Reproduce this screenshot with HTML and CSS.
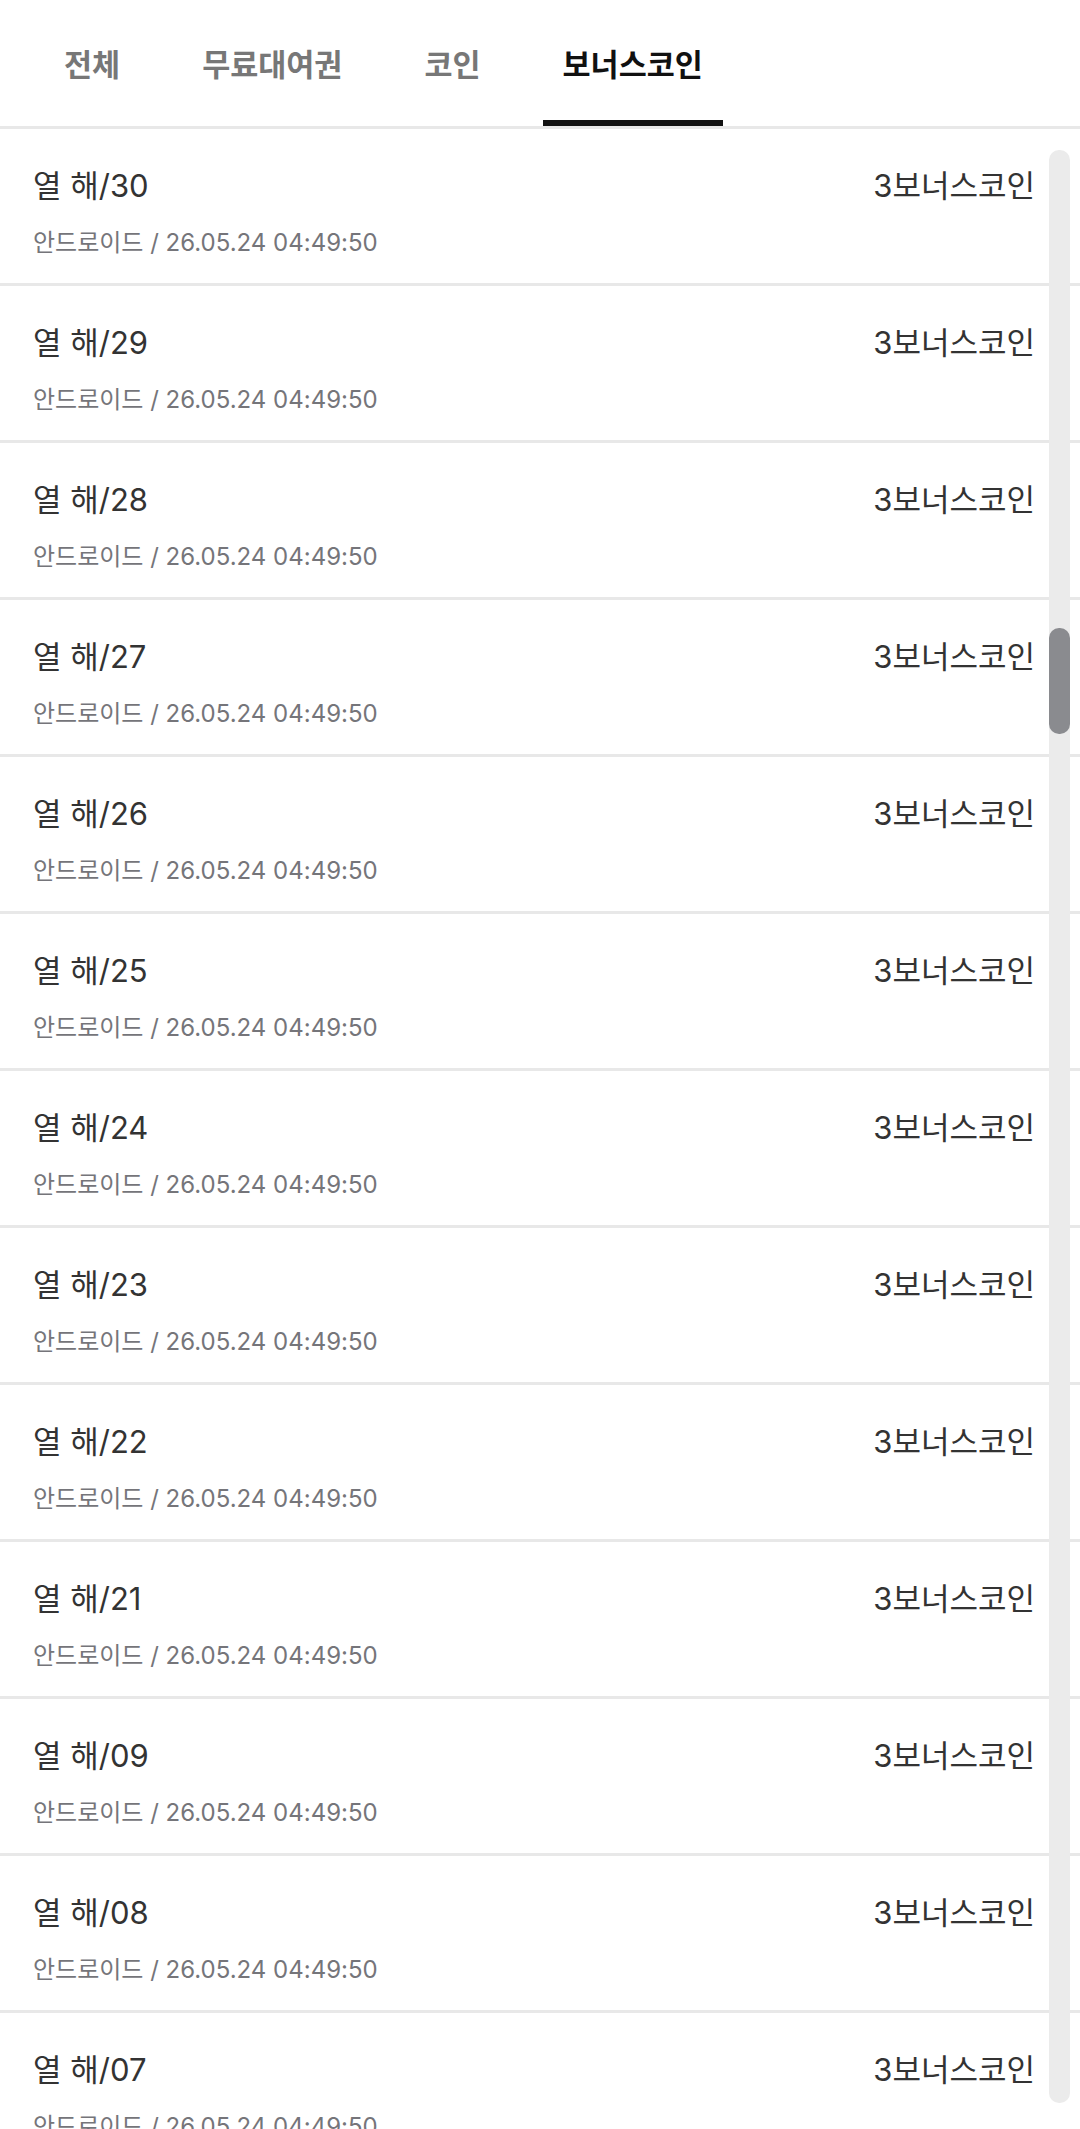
FILE: index.html
```html
<!DOCTYPE html>
<html lang="ko">
<head>
<meta charset="utf-8">
<title>보너스코인</title>
<link rel="stylesheet" href="styles.css">
</head>
<body>
<div class="page">
  <nav class="tabs">
    <a class="tab">전체</a>
    <a class="tab">무료대여권</a>
    <a class="tab">코인</a>
    <a class="tab active">보너스코인</a>
  </nav>
  <ul class="list">
    <li class="row"><div class="info"><div class="title">열 해/30</div><div class="sub">안드로이드 / 26.05.24 04:49:50</div></div><div class="amount">3보너스코인</div></li>
    <li class="row"><div class="info"><div class="title">열 해/29</div><div class="sub">안드로이드 / 26.05.24 04:49:50</div></div><div class="amount">3보너스코인</div></li>
    <li class="row"><div class="info"><div class="title">열 해/28</div><div class="sub">안드로이드 / 26.05.24 04:49:50</div></div><div class="amount">3보너스코인</div></li>
    <li class="row"><div class="info"><div class="title">열 해/27</div><div class="sub">안드로이드 / 26.05.24 04:49:50</div></div><div class="amount">3보너스코인</div></li>
    <li class="row"><div class="info"><div class="title">열 해/26</div><div class="sub">안드로이드 / 26.05.24 04:49:50</div></div><div class="amount">3보너스코인</div></li>
    <li class="row"><div class="info"><div class="title">열 해/25</div><div class="sub">안드로이드 / 26.05.24 04:49:50</div></div><div class="amount">3보너스코인</div></li>
    <li class="row"><div class="info"><div class="title">열 해/24</div><div class="sub">안드로이드 / 26.05.24 04:49:50</div></div><div class="amount">3보너스코인</div></li>
    <li class="row"><div class="info"><div class="title">열 해/23</div><div class="sub">안드로이드 / 26.05.24 04:49:50</div></div><div class="amount">3보너스코인</div></li>
    <li class="row"><div class="info"><div class="title">열 해/22</div><div class="sub">안드로이드 / 26.05.24 04:49:50</div></div><div class="amount">3보너스코인</div></li>
    <li class="row"><div class="info"><div class="title">열 해/21</div><div class="sub">안드로이드 / 26.05.24 04:49:50</div></div><div class="amount">3보너스코인</div></li>
    <li class="row"><div class="info"><div class="title">열 해/09</div><div class="sub">안드로이드 / 26.05.24 04:49:50</div></div><div class="amount">3보너스코인</div></li>
    <li class="row"><div class="info"><div class="title">열 해/08</div><div class="sub">안드로이드 / 26.05.24 04:49:50</div></div><div class="amount">3보너스코인</div></li>
    <li class="row"><div class="info"><div class="title">열 해/07</div><div class="sub">안드로이드 / 26.05.24 04:49:50</div></div><div class="amount">3보너스코인</div></li>
  </ul>
  <div class="scrollbar"><div class="thumb"></div></div>
</div>
</body>
</html>
```
FILE: styles.css
```css
html, body {
  margin: 0;
  padding: 0;
  background: #ffffff;
}
body {
  font-family: Inter, "Noto Sans CJK KR", sans-serif;
  height: 2129px;
  overflow: hidden;
}
.page {
  position: relative;
  width: 1080px;
  height: 2129px;
  overflow: hidden;
}
.tabs {
  display: flex;
  gap: 42px;
  padding-left: 44px;
  height: 126px;
  border-bottom: 3px solid #e8e8e8;
}
.tab {
  position: relative;
  display: flex;
  align-items: center;
  padding: 0 20px;
  font-family: "Noto Sans CJK KR", sans-serif;
  font-weight: 700;
  font-size: 30.5px;
  color: #777777;
}
.tab.active {
  color: #111111;
}
.tab.active::after {
  content: "";
  position: absolute;
  left: 0;
  right: 0;
  bottom: 0;
  height: 6px;
  background: #111111;
}
.list {
  list-style: none;
  margin: 0;
  padding: 0;
}
.row {
  display: flex;
  justify-content: space-between;
  align-items: flex-start;
  height: 154px;
  box-sizing: content-box;
  padding: 0 45px 0 33px;
  border-bottom: 3px solid #e8e8e8;
}
.info {
  display: flex;
  flex-direction: column;
  gap: 21px;
  padding-top: 37px;
}
.title {
  font-size: 31px;
  line-height: 40px;
  color: #333333;
}
.sub {
  font-size: 24px;
  line-height: 32px;
  color: #75757a;
}
.amount {
  padding-top: 37px;
  font-size: 31px;
  line-height: 40px;
  color: #333333;
}
.scrollbar {
  position: absolute;
  left: 1049px;
  top: 150px;
  width: 21px;
  height: 1953px;
  border-radius: 10px;
  background: #ebebeb;
}
.thumb {
  margin-top: 478px;
  width: 21px;
  height: 106px;
  border-radius: 10px;
  background: #8a8b8f;
}
```
